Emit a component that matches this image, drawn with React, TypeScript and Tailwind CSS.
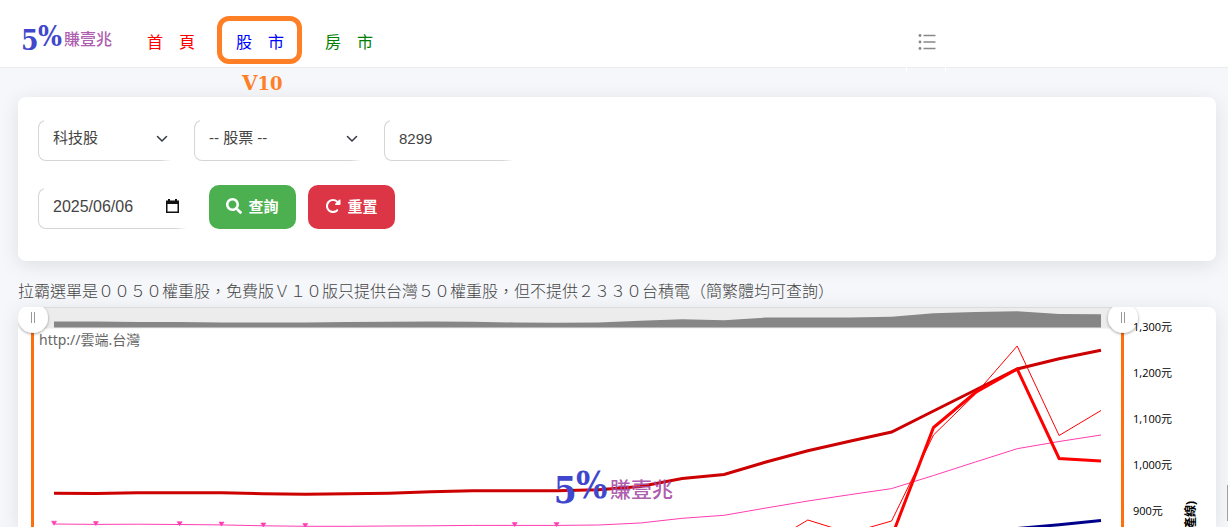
import clsx from "clsx";
import type { ReactNode } from "react";
import { FaSearch } from "react-icons/fa";
import { FaRotateRight } from "react-icons/fa6";

const STEP = 41.88;
const START_X = 36;
const FLOOR = 20.5;

const axisLabels = ["1,300元", "1,200元", "1,100元", "1,000元", "900元"];

const overview = [
  14.5, 14.5, 15, 15, 15.5, 15.5, 15.5, 15, 14.7, 14.5, 14.7, 15.5, 15.7, 15.5, 13.7, 12.3, 13.3, 10.5, 10.5, 10.5, 9.8,
  6.3, 5, 4.3, 7, 7.3,
];

const series = [
  {
    name: "pink",
    color: "#ff3db0",
    width: 1,
    from: 0,
    values: [
      217, 217.4, 217.2, 217.5, 217.9, 218.8, 219.3, 219.3, 219, 218.8, 218.4, 218.4, 218.4, 218, 216, 211.3, 208.3, 201,
      194, 187.7, 181.6, 168.5, 155, 141.7, 134.5, 128,
    ],
  },
  {
    name: "darkred",
    color: "#cc0000",
    width: 3,
    from: 0,
    values: [
      186.3, 186.5, 185.7, 185.7, 185.7, 186.7, 187.2, 186.7, 186.2, 184.8, 183.8, 183.8, 183.8, 182.8, 179.5, 171.6,
      167.4, 155, 143.8, 134.3, 125, 104, 83, 62, 51.7, 43.3,
    ],
  },
  { name: "thin", color: "#ff0000", width: 1, from: 17, values: [238, 213, 226, 214, 128, 87, 39, 128.5, 103.5] },
  { name: "thick", color: "#ff0000", width: 3, from: 20, values: [230, 120.5, 85.5, 62, 151.5, 154] },
  { name: "navy", color: "#00008b", width: 3, from: 22, values: [224, 221.5, 217.7, 213.5] },
];

const markers = [0, 1, 3, 4, 5, 6, 11, 12];

function toPoints(values: number[], from = 0) {
  return values.map((y, i) => `${(START_X + (from + i) * STEP).toFixed(1)},${y}`).join(" ");
}

function Logo(props: { className?: string; x?: number; y?: number; width?: number; height?: number }) {
  return (
    <svg viewBox="0 0 90 27" overflow="visible" role="img" aria-label="5%賺壹兆" {...props}>
      <g fill="#3f48cc" fontFamily="'DejaVu Serif Condensed', 'DejaVu Serif', serif" fontWeight="700">
        <text x="-1" y="26" fontSize="28">
          5
        </text>
        <text x="16" y="22" fontSize="28">
          %
        </text>
      </g>
      <text
        x="42"
        y="21"
        fontSize="16"
        fontWeight="500"
        fill="#a349a4"
        fillOpacity="0.9"
        fontFamily="'Noto Sans CJK TC', sans-serif"
      >
        賺壹兆
      </text>
    </svg>
  );
}

function Field({ className, children }: { className: string; children: ReactNode }) {
  return (
    <div className={clsx("relative h-[41px]", className)}>
      {children}
      <span className="absolute top-0 right-0 left-1.5 h-0.5 bg-white" />
      <span className="absolute right-0 bottom-0 h-px w-3 bg-linear-to-r from-transparent to-white" />
    </div>
  );
}

const control =
  "h-full w-full appearance-none rounded-l-lg border border-r-0 border-[#d5d5d5] bg-white pb-1 pl-3.5 text-[#444] outline-none";

function Chevron() {
  return (
    <svg
      viewBox="0 0 16 16"
      className="pointer-events-none absolute top-3 right-1 h-3 w-3"
      fill="none"
      stroke="#343a40"
      strokeWidth="2"
      strokeLinecap="round"
      strokeLinejoin="round"
    >
      <path d="m2 6 6 6 6-6" />
    </svg>
  );
}

function Handle({ x }: { x: number }) {
  return (
    <g>
      <rect x={x - 1} y="24" width="3" height="200" fill="#ff6600" fillOpacity="0.95" />
      <circle cx={x + 1} cy="11" r="15" fill="#fff" filter="url(#handle-shadow)" />
      <path d={`M${x - 0.5} 5v11M${x + 2.5} 5v11`} stroke="#999" strokeWidth="1" />
    </g>
  );
}

function Chart() {
  return (
    <svg viewBox="0 0 1198 220" className="block w-full" role="img" aria-label="股市走勢圖">
      <defs>
        <filter id="handle-shadow" x="-30%" y="-30%" width="160%" height="160%">
          <feDropShadow dx="0" dy="1" stdDeviation="1.5" floodOpacity="0.4" />
        </filter>
      </defs>
      <rect x="16" y="0" width="1089" height="21.5" fill="#ececec" />
      <rect x="16" y="0" width="1089" height="1" fill="#dcdcdc" />
      <polygon
        points={`${START_X},${FLOOR} ${toPoints(overview)} ${START_X + 25 * STEP},${FLOOR}`}
        fill="#868686"
      />
      {series.map(s => (
        <polyline key={s.name} points={toPoints(s.values, s.from)} fill="none" stroke={s.color} strokeWidth={s.width} />
      ))}
      {markers.map(i => {
        const x = START_X + i * STEP;
        const y = series[0].values[i];
        return <path key={i} d={`M${x - 2.5} ${y - 2.8}h5l-2.5 4z`} fill="#ff3db0" stroke="#ff3db0" strokeWidth="0.6" />;
      })}
      <text x="21" y="38" fontSize="14" fill="#666" fontFamily="'Noto Sans', 'Noto Sans CJK TC', sans-serif">
        http://雲端.台灣
      </text>
      <Logo x={537} y={162} width={118} height={36} />
      <Handle x={14} />
      <Handle x={1104} />
      <g fontSize="11" fill="#000" fontFamily="'Open Sans', 'Noto Sans CJK TC', sans-serif">
        {axisLabels.map((label, i) => (
          <text key={label} x="1115" y={24 + i * 46}>
            {label}
          </text>
        ))}
        <text transform="translate(1177 194) rotate(-90)" textAnchor="end" fontSize="12" fontWeight="700">
          產線)
        </text>
      </g>
    </svg>
  );
}

export default function App() {
  return (
    <div className="relative h-screen overflow-hidden bg-[#f5f7fb] font-['Liberation_Sans','Noto_Sans_CJK_TC',sans-serif]">
      <header className="flex h-[68px] items-center border-b border-[#ececee] bg-white pl-[22px]">
        <a href="#" className="mt-1.5">
          <Logo className="h-7 w-[90px]" />
        </a>
        <nav className="mt-[18px] ml-[35px] flex gap-[41px] text-base leading-6 whitespace-nowrap">
          <a href="#" className="text-[#ff0000]">
            首　頁
          </a>
          <a href="#" className="relative text-[#0000ff]">
            股　市
            <span className="absolute -top-[15px] -right-[18px] -bottom-[9px] -left-[19px] rounded-xl border-5 border-[#ff7f27]" />
            <span className="absolute top-9 left-1.5 font-['DejaVu_Serif',serif] text-xl leading-8 font-bold text-[#ff7f27]">
              V<span className="text-lg">10</span>
            </span>
          </a>
          <a href="#" className="text-[#008000]">
            房　市
          </a>
        </nav>
        <button
          type="button"
          aria-label="選單"
          className="relative mr-[282px] -mb-4 ml-auto flex h-[60px] w-10 items-center justify-center border-x border-white pl-0.5"
        >
          <svg viewBox="0 0 18 18" className="h-[18px] w-[18px]" stroke="#888" strokeWidth="1.3" fill="#888">
            <path d="M5.5 2.5h12M5.5 9h12M5.5 15.5h12" />
            <g stroke="none">
              <circle cx="2" cy="2.5" r="1.4" />
              <circle cx="2" cy="9" r="1.4" />
              <circle cx="2" cy="15.5" r="1.4" />
            </g>
          </svg>
        </button>
      </header>

      <main className="pt-[29px] pr-3 pl-[18px]">
        <form className="flex flex-col gap-6 rounded-lg bg-white px-5 pt-[23px] pb-8 shadow-[0_4px_20px_rgba(0,0,0,0.1)]">
          <div className="flex gap-[22px] text-[15px]">
            <Field className="w-[134px]">
              <select aria-label="類股" className={control}>
                <option>科技股</option>
              </select>
              <Chevron />
            </Field>
            <Field className="w-[168px]">
              <select aria-label="股票" className={control}>
                <option>-- 股票 --</option>
              </select>
              <Chevron />
            </Field>
            <Field className="w-[130px]">
              <input aria-label="股票代號" type="text" defaultValue="8299" className={control} />
            </Field>
          </div>
          <div className="flex items-end gap-[22px]">
            <Field className="w-[149px]">
              <input aria-label="日期" type="text" defaultValue="2025/06/06" className={control} />
              <svg viewBox="0 0 13 14" className="absolute top-[11px] right-2 h-3.5 w-[13px]" fill="#111">
                <path d="M2 0h2v1.5h5V0h2v1.5h2V14H0V1.5h2zM1.5 5v7.5h10V5z" fillRule="evenodd" />
              </svg>
            </Field>
            <div className="flex gap-3 text-[15px] font-bold text-white">
              <button
                type="submit"
                className="flex h-11 w-[87px] items-center justify-center gap-1.5 rounded-[10px] bg-[#4caf50]"
              >
                <FaSearch className="mb-0.5 h-4 w-4" />
                查詢
              </button>
              <button
                type="reset"
                className="flex h-11 w-[87px] items-center justify-center gap-1.5 rounded-[10px] bg-[#dc3545]"
              >
                <FaRotateRight className="mb-0.5 h-4 w-4" />
                重置
              </button>
            </div>
          </div>
        </form>

        <p className="mt-[19px] mb-[3px] text-base leading-6 font-light text-[#444]">
          拉霸選單是００５０權重股，免費版Ｖ１０版只提供台灣５０權重股，但不提供２３３０台積電（簡繁體均可查詢）
        </p>

        <section className="overflow-hidden rounded-t-lg bg-white shadow-[0_4px_20px_rgba(0,0,0,0.1)]">
          <Chart />
        </section>
      </main>
      <div className="absolute right-0 bottom-1.5 h-9 w-px bg-[#a0a0a0]" />
    </div>
  );
}
